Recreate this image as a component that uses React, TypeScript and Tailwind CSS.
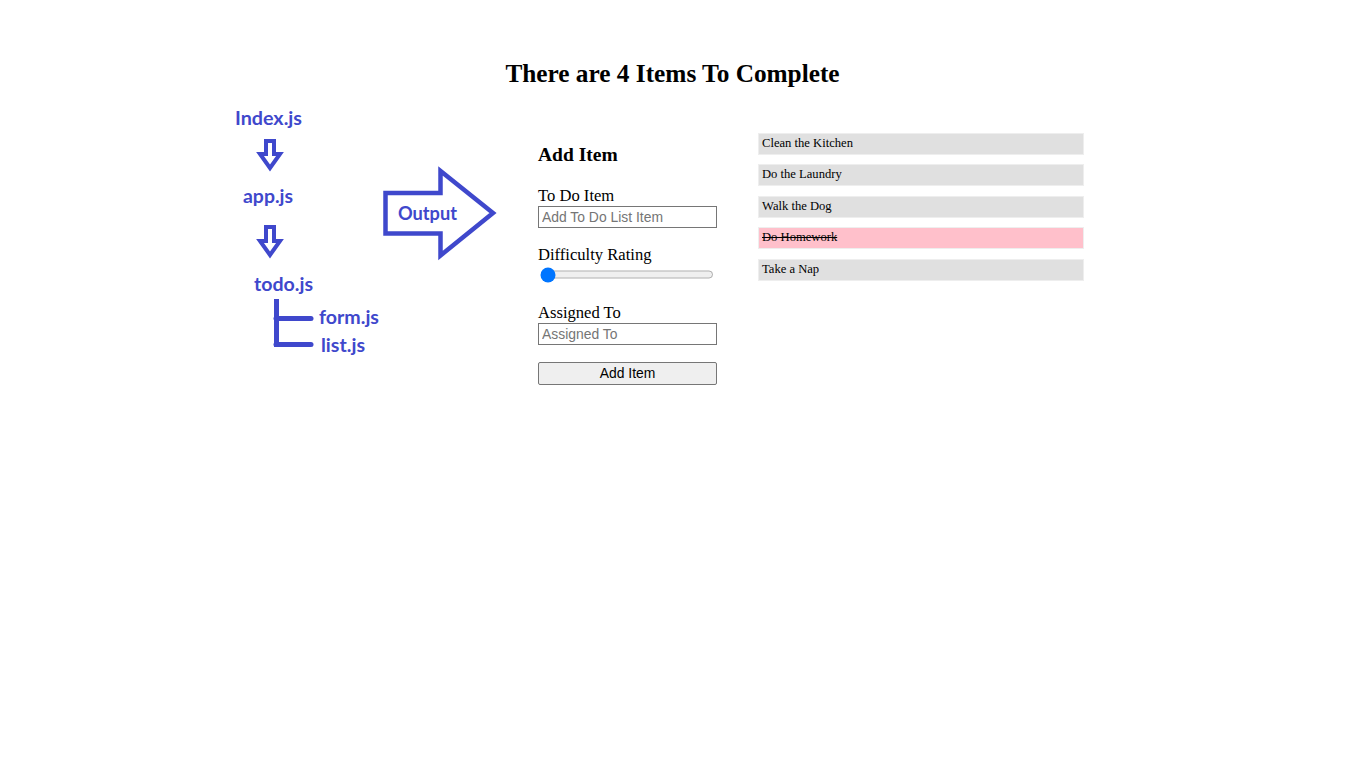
import { useState } from "react";

interface Todo {
  id: number;
  text: string;
  complete: boolean;
}

const initialTodos: Todo[] = [
  { id: 1, text: "Clean the Kitchen", complete: false },
  { id: 2, text: "Do the Laundry", complete: false },
  { id: 3, text: "Walk the Dog", complete: false },
  { id: 4, text: "Do Homework", complete: true },
  { id: 5, text: "Take a Nap", complete: false },
];

const BLUE = "#3f48cc";

function Diagram() {
  const label = {
    fill: BLUE,
    fontFamily: "Lato, 'Open Sans', sans-serif",
    fontWeight: 700,
    fontSize: 19,
  };
  return (
    <svg width="280" height="260" viewBox="228 105 280 260" className="shrink-0">
      <text x="235" y="125" textLength="67" lengthAdjust="spacingAndGlyphs" {...label}>Index.js</text>
      <polygon points="266,141 274,141 274,154 280,154 270,168 260,154 266,154" fill="white" stroke={BLUE} strokeWidth="4" strokeLinejoin="miter" />
      <text x="243" y="202.5" textLength="50" lengthAdjust="spacingAndGlyphs" {...label}>app.js</text>
      <polygon points="266,227 274,227 274,241 280,241 270,255 260,241 266,241" fill="white" stroke={BLUE} strokeWidth="4" strokeLinejoin="miter" />
      <text x="254" y="291" textLength="59" lengthAdjust="spacingAndGlyphs" {...label}>todo.js</text>
      {/* linhas da árvore */}
      <line x1="276.5" y1="299" x2="276.5" y2="347" stroke={BLUE} strokeWidth="5" />
      <line x1="276" y1="318.5" x2="311" y2="318.5" stroke={BLUE} strokeWidth="5" strokeLinecap="round" />
      <line x1="276" y1="344.5" x2="311" y2="344.5" stroke={BLUE} strokeWidth="5" strokeLinecap="round" />
      <text x="319" y="323.5" textLength="60" lengthAdjust="spacingAndGlyphs" {...label}>form.js</text>
      <text x="321" y="352" textLength="44" lengthAdjust="spacingAndGlyphs" {...label}>list.js</text>
      {/* seta de saída */}
      <polygon points="385.5,193 440.5,193 440.5,171 493,213 440.5,255.5 440.5,233.5 385.5,233.5" fill="white" stroke={BLUE} strokeWidth="4.5" strokeLinejoin="miter" />
      <text x="398" y="220" textLength="59" lengthAdjust="spacingAndGlyphs" {...label}>Output</text>
    </svg>
  );
}

export default function App() {
  const [todos] = useState<Todo[]>(initialTodos);
  const [difficulty, setDifficulty] = useState(1);
  const remaining = todos.filter((t) => !t.complete).length;

  return (
    <div className="min-h-screen bg-white text-black font-['Liberation_Serif','Times_New_Roman',serif]">
      {/* Título */}
      <div className="flex justify-center pr-[21px] pt-[58px]">
        <h1 className="text-[25.3px] leading-[30px] font-bold">There are {remaining} Items To Complete</h1>
      </div>

      <div className="flex items-start mt-[17px] pl-[228px]">
        <Diagram />

        {/* Formulário */}
        <form className="ml-[30px] w-[179px] mt-[38px] flex flex-col" onSubmit={(e) => e.preventDefault()}>
          <h3 className="text-[19.5px] leading-[24px] font-bold">Add Item</h3>
          <label className="mt-[19px] text-[16.6px] leading-[20px]">To Do Item</label>
          <input
            type="text"
            placeholder="Add To Do List Item"
            className="h-[22px] w-[179px] border border-[#767676] px-[3px] text-[13.9px] font-['Liberation_Sans',Arial,sans-serif] placeholder:text-[#757575]"
          />
          <label className="mt-[17px] text-[16.6px] leading-[20px]">Difficulty Rating</label>
          <input
            type="range"
            min={1}
            max={5}
            value={difficulty}
            onChange={(e) => setDifficulty(Number(e.target.value))}
            className="mt-[1px] ml-[2px] w-[174px] h-[17px]"
          />
          <label className="mt-[20px] text-[16.6px] leading-[20px]">Assigned To</label>
          <input
            type="text"
            placeholder="Assigned To"
            className="h-[22px] w-[179px] border border-[#767676] px-[3px] text-[13.9px] font-['Liberation_Sans',Arial,sans-serif] placeholder:text-[#757575]"
          />
          <button
            type="submit"
            className="mt-[17px] h-[23px] w-[179px] bg-[#efefef] border border-[#767676] rounded-[2px] text-[13.9px] font-['Liberation_Sans',Arial,sans-serif] text-black"
          >
            Add Item
          </button>
        </form>

        {/* Lista */}
        <ul className="ml-[41px] w-[326px] mt-[27.5px] flex flex-col gap-[9.5px]">
          {todos.map((todo) => (
            <li
              key={todo.id}
              className={`h-[22px] border border-[#eeeeee] pl-[3px] text-[12.6px] leading-[19px] ${
                todo.complete ? "bg-[#ffc0cb] line-through" : "bg-[#e0e0e0]"
              }`}
            >
              {todo.text}
            </li>
          ))}
        </ul>
      </div>
    </div>
  );
}
